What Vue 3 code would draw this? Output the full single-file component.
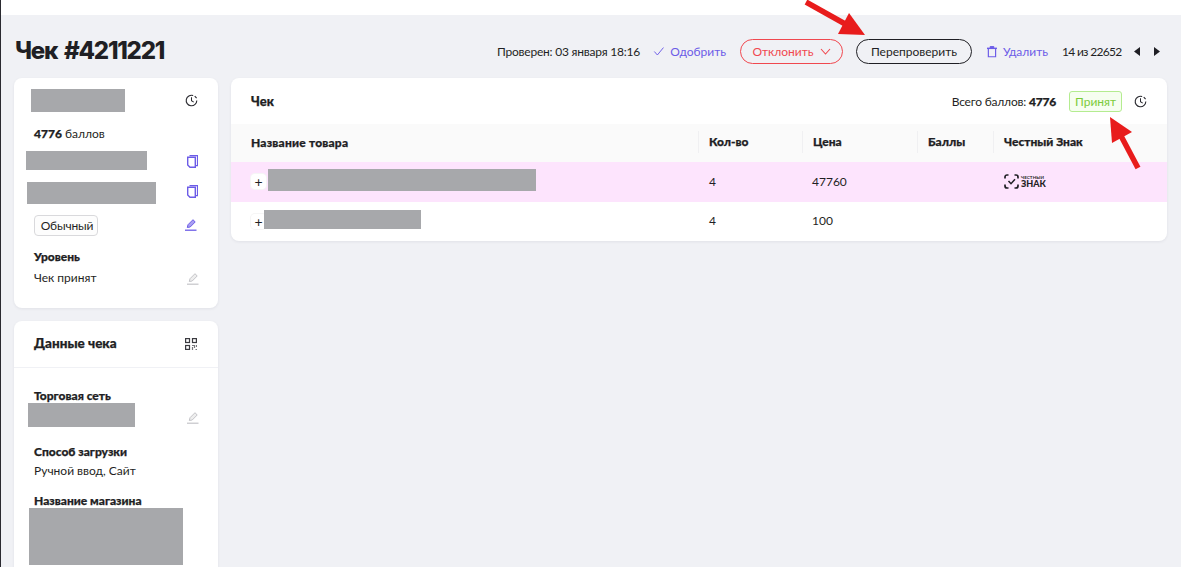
<script setup>
const rows = [
  { pink: true, w: 268, ml: 2, h: 22, qty: 4, price: '47760', logo: true },
  { pink: false, w: 157, ml: -2, h: 19, qty: 4, price: '100', logo: false },
]
</script>

<template>
  <div class="page">
    <div class="topbar"></div>
    <div class="content">
      <header class="head">
        <h1>Чек #4211221</h1>
        <div class="actions">
          <span class="checked">Проверен: 03 января 18:16</span>
          <a class="link approve">
            <svg width="13" height="11" viewBox="0 0 13 11" fill="none"><path d="M1.500 5.500l3.500 4 7-8.500" stroke="#6c5ce7" stroke-width="1.100"/></svg>
            Одобрить
          </a>
          <button class="pill reject">Отклонить
            <svg width="11" height="7" viewBox="0 0 11 7" fill="none"><path d="M1 1l4.500 5L10 1" stroke="#f0484f" stroke-width="1.100"/></svg>
          </button>
          <button class="pill recheck">Перепроверить</button>
          <a class="link remove">
            <svg width="11" height="13" viewBox="0 0 11 13" fill="none"><path d="M3.500 1h4v1.500h-4z" fill="#6c5ce7" stroke="#6c5ce7"/><path d="M0 3h11" stroke="#6c5ce7" stroke-width="1.600"/><path d="M1.500 3v9.300h8V3" stroke="#6c5ce7" stroke-width="1.300"/></svg>
            Удалить
          </a>
          <span class="count">14 из 22652</span>
          <span class="nav">
            <svg width="7" height="9" viewBox="0 0 7 9"><path d="M6 0v9L0 4.500z" fill="#1f1f24"/></svg>
            <svg width="7" height="9" viewBox="0 0 7 9"><path d="M1 0v9l6-4.500z" fill="#1f1f24"/></svg>
          </span>
        </div>
      </header>

      <div class="columns">
        <aside class="side">
          <section class="card user">
            <div class="row r1">
              <i class="blk b1"></i>
              <svg class="ico" width="13" height="13" viewBox="0 0 14 14" fill="none"><path d="M12.700 7A5.700 5.700 0 1 1 8.800 1.600" stroke="#2a2a30" stroke-width="1.200"/><path d="M7 3.600V7.300l2.400 1.500" stroke="#2a2a30" stroke-width="1.100"/><path d="M10.500 2.200l2 2.200" stroke="#2a2a30" stroke-width="1.200"/></svg>
            </div>
            <p class="pts"><b>4776</b> баллов</p>
            <div class="row r2">
              <i class="blk b2"></i>
              <svg class="ico" width="11" height="13" viewBox="0 0 11 13" fill="none"><path d="M2.500 .6h8v10H8.500" stroke="#6c5ce7" stroke-width="1.200"/><path d="M.7 2.200h7.600v10.100H3L.7 10z" stroke="#6c5ce7" stroke-width="1.400"/></svg>
            </div>
            <div class="row r3">
              <i class="blk b3"></i>
              <svg class="ico" width="11" height="13" viewBox="0 0 11 13" fill="none"><path d="M2.500 .6h8v10H8.500" stroke="#6c5ce7" stroke-width="1.200"/><path d="M.7 2.200h7.600v10.100H3L.7 10z" stroke="#6c5ce7" stroke-width="1.400"/></svg>
            </div>
            <div class="row r4">
              <span class="tag">Обычный</span>
              <svg class="ico pen" width="12" height="13" viewBox="0 0 12 13" fill="none"><path d="M2.300 9.500l.7-2.800 5-5L10.200 4l-5 5z" fill="#a99ff2" stroke="#6c5ce7"/><path d="M0 12.200h11.500" stroke="#6c5ce7" stroke-width="1.300"/></svg>
            </div>
            <div class="lvl">
              <h4>Уровень</h4>
              <div class="row val">
                <span>Чек принят</span>
                <svg class="ico pen-g" width="12" height="13" viewBox="0 0 12 13" fill="none"><path d="M2.300 9.500l.7-2.800 5-5L10.200 4l-5 5z" fill="#eee" stroke="#c4c4c8"/><path d="M0 12.200h11.500" stroke="#c4c4c8" stroke-width="1.200"/></svg>
              </div>
            </div>
          </section>

          <section class="card data">
            <div class="data-head">
              <h3>Данные чека</h3>
              <svg class="qr" width="12" height="12" viewBox="0 0 12 12" fill="none" stroke="#3a3a40" stroke-width="1.200"><rect x=".6" y=".6" width="3.900" height="3.900"/><rect x="7.500" y=".6" width="3.900" height="3.900"/><rect x=".6" y="7.500" width="3.900" height="3.900"/><path d="M7 7.500h2.500V10M11.500 7v2M7.500 9v3M10.500 11.500h1.500" stroke="#77777c"/></svg>
            </div>
            <div class="data-body">
              <h4>Торговая сеть</h4>
              <div class="row net">
                <i class="blk b4"></i>
                <svg class="ico pen-g net-pen" width="12" height="13" viewBox="0 0 12 13" fill="none"><path d="M2.300 9.500l.7-2.800 5-5L10.200 4l-5 5z" fill="#eee" stroke="#c4c4c8"/><path d="M0 12.200h11.500" stroke="#c4c4c8" stroke-width="1.200"/></svg>
              </div>
              <h4 class="way">Способ загрузки</h4>
              <p class="plain">Ручной ввод, Сайт</p>
              <h4 class="shop">Название магазина</h4>
              <i class="blk b5"></i>
            </div>
          </section>
        </aside>

        <main class="card main">
          <div class="main-head">
            <h3>Чек</h3>
            <div class="summary">
              <span class="total">Всего баллов: <b>4776</b></span>
              <span class="ok">Принят</span>
              <svg width="13" height="13" viewBox="0 0 14 14" fill="none"><path d="M12.700 7A5.700 5.700 0 1 1 8.800 1.600" stroke="#2a2a30" stroke-width="1.200"/><path d="M7 3.600V7.300l2.400 1.500" stroke="#2a2a30" stroke-width="1.100"/><path d="M10.500 2.200l2 2.200" stroke="#2a2a30" stroke-width="1.200"/></svg>
            </div>
          </div>
          <div class="grid thead">
            <span class="c0">Название товара</span>
            <span class="c1 line">Кол-во</span>
            <span class="c2 line">Цена</span>
            <span class="c3 line">Баллы</span>
            <span class="c4 line">Честный Знак</span>
          </div>
          <div v-for="(r, i) in rows" :key="i" class="grid trow" :class="{ pink: r.pink }">
            <span class="c0 name">
              <span class="plus">+</span>
              <i class="blk" :style="{ width: r.w + 'px', height: r.h + 'px', marginLeft: r.ml + 'px' }"></i>
            </span>
            <span class="c1">{{ r.qty }}</span>
            <span class="c2">{{ r.price }}</span>
            <span class="c3"></span>
            <span class="c4">
              <span v-if="r.logo" class="cz">
                <svg width="15" height="15" viewBox="0 0 15 15" fill="none" stroke="#1f1f24" stroke-width="1.700"><path d="M1 4.500V3a2 2 0 0 1 2-2h1.500M10.500 1H12a2 2 0 0 1 2 2v1.500M14 10.500V12a2 2 0 0 1-2 2h-1.500M4.500 14H3a2 2 0 0 1-2-2v-1.500"/><path d="M4.500 7l2.500 2.700L11 5.200" stroke-width="1.500"/></svg>
                <span class="cz-t"><small>ЧЕСТНЫЙ</small><b>ЗНАК</b></span>
              </span>
            </span>
          </div>
        </main>
      </div>
    </div>

    <svg class="arrows" width="1181" height="567" viewBox="0 0 1181 567">
      <path d="M806 2L847 25" stroke="#e81c1c" stroke-width="5.500"/>
      <path d="M849 13L838 34L865 35z" fill="#e81c1c"/>
      <path d="M1138 168L1120 134" stroke="#e81c1c" stroke-width="5.500"/>
      <path d="M1110 117L1132 132L1112 143z" fill="#e81c1c"/>
    </svg>
  </div>
</template>

<style>
html, body { margin: 0; background: #f0f1f5; }
</style>

<style scoped>
.page {
  position: relative;
  width: 1181px;
  height: 567px;
  overflow: hidden;
  background: #f0f1f5;
  font-family: "Lato", "Open Sans", sans-serif;
  font-size: 12px;
  color: #1f1f24;
  border-left: 1px solid #2a2a30;
  box-sizing: border-box;
}
.topbar { height: 15px; background: #fff; margin-left: -1px; position: relative; }
.content { padding: 0 14px 0 13px; }
.head { display: flex; justify-content: space-between; align-items: center; height: 63px; padding-left: 1px; padding-top: 12px; box-sizing: border-box; }
h1 { margin: 0; font-size: 24px; font-weight: 800; font-family: "Inter", sans-serif; letter-spacing: -1.250px; word-spacing: 3px; line-height: 30px; margin-top: -3px; }
.actions { display: flex; align-items: center; padding-right: 7px; margin-top: -2px; }
.checked { width: 143px; white-space: nowrap; letter-spacing: -.22px; margin-right: 13px; }
.link { display: inline-flex; align-items: center; gap: 6px; color: #6c5ce7; }
.approve { margin-right: 14px; width: 73px; white-space: nowrap; }
.pill { font: inherit; height: 25px; border-radius: 13px; background: none; padding: 0; display: inline-flex; align-items: center; justify-content: center; box-sizing: border-box; }
.reject { width: 103px; border: 1px solid #f0484f; color: #f0484f; gap: 6px; margin-right: 13px; }
.recheck { width: 116px; border: 1px solid #1f1f24; color: #1f1f24; margin-right: 15px; }
.remove { margin-right: 14px; width: 61px; white-space: nowrap; }
.count { margin-right: 12px; width: 60px; white-space: nowrap; letter-spacing: -.7px; }
.nav { display: inline-flex; gap: 12px; }

.columns { display: flex; gap: 13px; align-items: flex-start; }
.side { width: 204px; display: flex; flex-direction: column; gap: 13px; flex: none; }
.card { background: #fff; border-radius: 8px; box-shadow: 0 1px 3px rgba(30,30,60,.07); }
.blk { display: block; background: #a7a8ab; flex: none; }
.row { display: flex; justify-content: space-between; align-items: center; }
.ico { flex: none; }

.user { height: 230px; padding: 11px 20px 0 12px; box-sizing: border-box; }
.b1 { width: 94px; height: 23px; margin-left: 5px; }
.pts { margin: 14px 0 0 8px; line-height: 16px; }
.pts b, .total b, h3, h4, .thead { -webkit-text-stroke: .25px currentColor; }
.pts b { font-weight: 900; }
.r2 { margin-top: 9px; }
.r2 .ico { margin-top: 2px; }
.b2 { width: 121px; height: 19px; }
.r3 { margin-top: 12px; }
.r3 .ico { margin-bottom: 4px; }
.b3 { width: 129px; height: 22px; margin-left: 1px; }
.r4 { margin-top: 11px; padding-left: 8px; }
.tag { border: 1px solid #d9d9dc; border-radius: 4px; height: 21px; width: 64px; box-sizing: border-box; display: inline-flex; align-items: center; justify-content: center; background: #fdfdfd; padding-left: 2px; letter-spacing: -.15px; }
.pen { margin-right: 1px; margin-bottom: 2px; }
.pen-g { margin-right: -1px; margin-top: 2px; }
.net-pen { margin-top: 0; margin-bottom: 3px; }
.lvl { padding-left: 8px; margin-top: 13px; }
h4 { margin: 0; font-size: 12px; font-weight: 900; line-height: 15px; }
h3 { margin: 0; font-size: 13.500px; font-weight: 900; }
.val { margin-top: 6px; line-height: 15px; }

.data { height: 320px; }
.data-head { height: 46px; display: flex; justify-content: space-between; align-items: center; padding: 0 21px 0 20px; border-bottom: 1px solid #f0f1f5; }
.data-head h3 { margin-top: -2px; }
.data-body { padding: 20px 20px 0 20px; }
.net { align-items: flex-end; }
.b4 { width: 107px; height: 24px; margin-left: -6px; }
.way { margin-top: 17px; }
.plain { margin: 4px 0 0; line-height: 15px; }
.shop { margin-top: 15px; }
.b5 { width: 154px; height: 57px; margin-left: -5px; }

.main { flex: 1; overflow: hidden; }
.main-head { height: 46px; display: flex; justify-content: space-between; align-items: center; padding: 0 20px; }
.main-head h3 { margin-top: -1px; font-size: 13px; }
.summary { display: flex; align-items: center; }
.total { letter-spacing: -.2px; }
.summary b { font-weight: 900; }
.ok { margin-left: 13px; margin-right: 12px; width: 53px; height: 21px; box-sizing: border-box; border: 1px solid #b4ec90; border-radius: 3px; background: #f6fef0; color: #7ccb3a; display: inline-flex; align-items: center; justify-content: center; }
.grid { display: grid; grid-template-columns: 467px 104px 115px 76px 174px; align-items: center; }
.grid > span { padding-left: 10px; }
.grid > .c0 { padding-left: 20px; }
.thead { height: 38px; background: #fafafa; font-weight: 900; }
.thead > span { margin-top: -2px; }
.thead .c0 { letter-spacing: .2px; }
.line { border-left: 1px solid #f0f0f2; line-height: 22px; }
.trow { height: 39.500px; }
.trow > span { margin-top: -1px; }
.trow > .c1 { padding-left: 11px; }
.pink { background: #fde4fd; }
.name { display: flex; align-items: center; margin-top: 0 !important; }
.name .blk { margin-bottom: 4px; }
.plus { width: 15px; height: 15px; border-radius: 4px; background: #fff; box-shadow: 0 0 0 1px #f6f6f6; display: inline-flex; align-items: center; justify-content: center; font-size: 14px; flex: none; }
.cz { display: inline-flex; align-items: center; gap: 2px; margin-top: 4px; margin-left: 1px; }
.cz-t { display: flex; flex-direction: column; }
.cz-t small { font-size: 4.500px; font-weight: 700; line-height: 5px; letter-spacing: .1px; }
.cz-t b { font-size: 9px; font-weight: 900; line-height: 8px; letter-spacing: 0; }
.arrows { position: absolute; left: -1px; top: 0; pointer-events: none; }
</style>
